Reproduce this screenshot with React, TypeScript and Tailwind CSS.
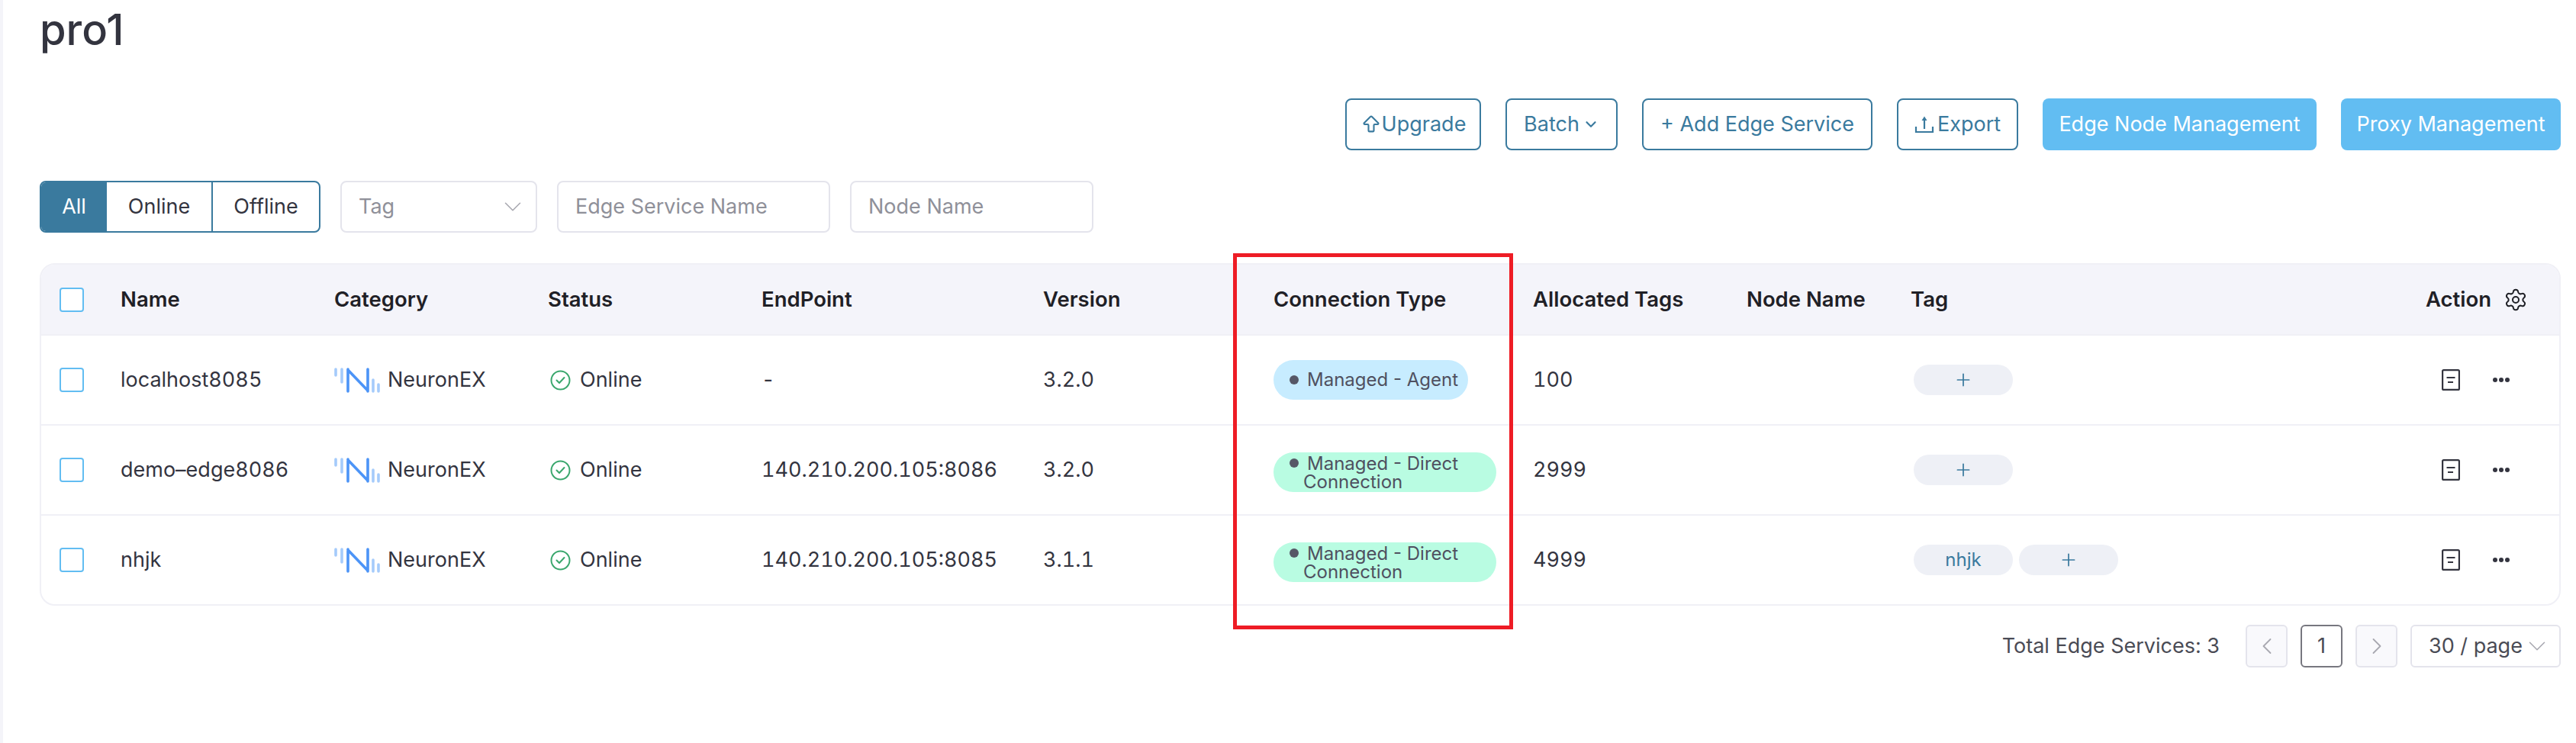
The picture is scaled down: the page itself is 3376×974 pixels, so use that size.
import { ArrowBigUp, ChevronDown, ChevronLeft, ChevronRight, Plus, Settings } from 'lucide-react'

const columns = 'grid grid-cols-[104px_280px_280px_280px_369px_302px_340px_280px_215px_675px_175px] items-center'

const rows = [
  { name: 'localhost8085', endpoint: '-', version: '3.2.0', type: 'Managed - Agent', agent: true, tags: '100', labels: [] as string[] },
  { name: 'demo–edge8086', endpoint: '140.210.200.105:8086', version: '3.2.0', type: 'Managed - Direct Connection', agent: false, tags: '2999', labels: [] as string[] },
  { name: 'nhjk', endpoint: '140.210.200.105:8085', version: '3.1.1', type: 'Managed - Direct Connection', agent: false, tags: '4999', labels: ['nhjk'] },
]

function Checkbox() {
  return <span className="ml-6 block h-8 w-8 rounded-[4px] border-2 border-[#62bdf2] bg-white" />
}

function NeuronLogo() {
  return (
    <svg width="60" height="33" viewBox="0 0 60 33" fill="none" strokeLinecap="round" strokeWidth="3.6">
      <g stroke="#a5cbfb">
        <path d="M2 2v8M10 2v17M51 16v15M58 22v9" />
      </g>
      <path d="M18 2v29M18 3l26 27M44 2v29" stroke="#4c94f7" />
    </svg>
  )
}

function OnlineIcon() {
  return (
    <svg width="27" height="27" viewBox="0 0 27 27" fill="none" stroke="#3aa76d" strokeWidth="2">
      <circle cx="13.5" cy="13.5" r="12" />
      <path d="M8.5 13.5l3.5 3.5 6.5-7" strokeLinecap="round" strokeLinejoin="round" />
    </svg>
  )
}

function DocIcon() {
  return (
    <svg width="24" height="28" viewBox="0 0 24 28" fill="none" stroke="#33343f" strokeWidth="2.2">
      <rect x="1.1" y="1.1" width="21.8" height="25.8" rx="1.5" />
      <path d="M6.5 11h11M8 17h7" />
    </svg>
  )
}

function DotsIcon() {
  return (
    <svg width="22" height="8" viewBox="0 0 22 8" fill="#33343f">
      <circle cx="3" cy="4" r="3" />
      <circle cx="11" cy="4" r="3" />
      <circle cx="19" cy="4" r="3" />
    </svg>
  )
}

function ExportIcon() {
  return (
    <svg width="26" height="24" viewBox="0 0 26 24" fill="none" stroke="#3a7a9e" strokeWidth="2.2">
      <path d="M13 5v13M2 15v7h22v-7" />
      <path d="M9.5 7 13 1.5 16.5 7z" fill="#3a7a9e" stroke="none" />
    </svg>
  )
}

function OutlineButton({ children, className }: { children: React.ReactNode; className: string }) {
  return (
    <button className={`flex h-[68px] items-center justify-center rounded-lg border-2 border-[#3a7a9e] bg-white text-[#3a7a9e] ${className}`}>
      {children}
    </button>
  )
}

function Field({ label, className, chevron }: { label: string; className: string; chevron?: boolean }) {
  return (
    <div className={`flex h-[68px] items-center justify-between rounded-lg border-2 border-[#e4e4ec] text-[#8f9099] ${className}`}>
      <span>{label}</span>
      {chevron && <ChevronDown size={38} strokeWidth={1} className="text-[#a8a8b0]" />}
    </div>
  )
}

function Pill({ children }: { children: React.ReactNode }) {
  return (
    <span className="flex h-10 w-[130px] items-center justify-center rounded-full bg-[#eef0f6] text-2xl text-[#3a7a9e]">
      {children}
    </span>
  )
}

export default function App() {
  return (
    <div className="relative flex min-h-[974px] bg-white font-['Inter',sans-serif] text-[27px] text-[#33343f]">
      <div className="w-1 shrink-0 bg-[#f4f4f9]" />
      <main className="ml-12 w-[3304px]">
        <h1 className="h-[129px] pt-[7px] text-[56px] leading-[64px] font-medium">pro1</h1>

        <div className="flex justify-end gap-8">
          <OutlineButton className="w-[178px]"><ArrowBigUp size={28} strokeWidth={1.8} />Upgrade</OutlineButton>
          <OutlineButton className="w-[147px] gap-1">Batch<ChevronDown size={22} strokeWidth={2.4} /></OutlineButton>
          <OutlineButton className="w-[302px]">+ Add Edge Service</OutlineButton>
          <OutlineButton className="w-[159px] gap-1"><ExportIcon />Export</OutlineButton>
          <button className="h-[68px] w-[359px] rounded-lg bg-[#62bdf2] text-white">Edge Node Management</button>
          <button className="h-[68px] w-[288px] rounded-lg bg-[#62bdf2] text-white">Proxy Management</button>
        </div>

        <div className="mt-10 flex gap-[26px]">
          <div className="flex h-[68px] w-[368px] overflow-hidden rounded-lg border-2 border-[#3a7a9e]">
            <span className="flex w-[86px] items-center justify-center bg-[#3a7a9e] text-white">All</span>
            <span className="flex w-[139px] items-center justify-center border-r-2 border-[#3a7a9e]">Online</span>
            <span className="flex flex-1 items-center justify-center">Offline</span>
          </div>
          <Field label="Tag" chevron className="w-[258px] pr-[11px] pl-[22px]" />
          <Field label="Edge Service Name" className="w-[358px] pl-[22px]" />
          <Field label="Node Name" className="w-[319px] pl-[22px]" />
        </div>

        <div className="mt-10 overflow-hidden rounded-[20px] border-2 border-[#f0f0f6]">
          <div className={`${columns} h-[93px] border-b-2 border-[#f0f0f6] bg-[#f4f4fa] text-[27.5px] font-semibold text-[#1f2026]`}>
            <Checkbox />
            <span>Name</span>
            <span>Category</span>
            <span>Status</span>
            <span>EndPoint</span>
            <span>Version</span>
            <span>Connection Type</span>
            <span>Allocated Tags</span>
            <span>Node Name</span>
            <span>Tag</span>
            <span className="flex items-center gap-4">Action<Settings size={32} strokeWidth={1.5} /></span>
          </div>
          {rows.map((row) => (
            <div key={row.name} className={`${columns} h-[118px] border-b-2 border-[#f0f0f6] last:h-[116px] last:border-b-0`}>
              <Checkbox />
              <span className="tabular-nums">{row.name}</span>
              <span className="flex items-center gap-[10px]"><NeuronLogo />NeuronEX</span>
              <span className="flex items-center gap-3 pl-[3px]"><OnlineIcon />Online</span>
              <span className="tabular-nums">{row.endpoint}</span>
              <span className="tabular-nums">{row.version}</span>
              <span
                className={`relative flex min-h-[52px] w-fit max-w-[292px] items-center rounded-[26px] pr-[13px] pl-[39px] text-2xl leading-6 text-[#4f5060] ${row.agent ? 'bg-[#c7ecff]' : 'mt-1.5 bg-[#b9fce2] pt-[3px] pb-px'}`}
              >
                <i className={`absolute left-[21px] h-3 w-3 rounded-full bg-[#565766] ${row.agent ? 'top-5' : 'top-2'}`} />
                <span className="indent-[5px]">{row.type}</span>
              </span>
              <span className="tabular-nums">{row.tags}</span>
              <span />
              <span className="flex gap-2 pl-1">
                {row.labels.map((label) => <Pill key={label}>{label}</Pill>)}
                <Pill><Plus size={26} strokeWidth={1.6} /></Pill>
              </span>
              <span className="flex items-center gap-[43px] pl-[21px]"><DocIcon /><DotsIcon /></span>
            </div>
          ))}
        </div>

        <div className="mt-[25px] flex items-center justify-end text-[#4a4b55]">
          <span className="mr-[34px]">Total Edge Services: 3</span>
          <span className="mr-[17px] flex h-14 w-[55px] items-center justify-center rounded-md border-2 border-[#e4e4ec] bg-[#f9f9fc] text-[#a8a8b0]"><ChevronLeft size={36} strokeWidth={1.2} /></span>
          <span className="mr-[17px] flex h-14 w-[55px] items-center justify-center rounded-md border-2 border-[#77777f]">1</span>
          <span className="mr-[17px] flex h-14 w-[55px] items-center justify-center rounded-md border-2 border-[#e4e4ec] bg-[#f9f9fc] text-[#a8a8b0]"><ChevronRight size={36} strokeWidth={1.2} /></span>
          <span className="flex h-14 w-[197px] items-center rounded-md border-2 border-[#e4e4ec] pl-[22px]">30 / page<ChevronDown size={38} strokeWidth={1} className="text-[#a8a8b0]" /></span>
        </div>
      </main>
      {/* annotation box drawn over the table */}
      <div className="absolute top-[332px] left-[1616px] h-[493px] w-[367px] border-[5px] border-[#ee1c25]" />
    </div>
  )
}
